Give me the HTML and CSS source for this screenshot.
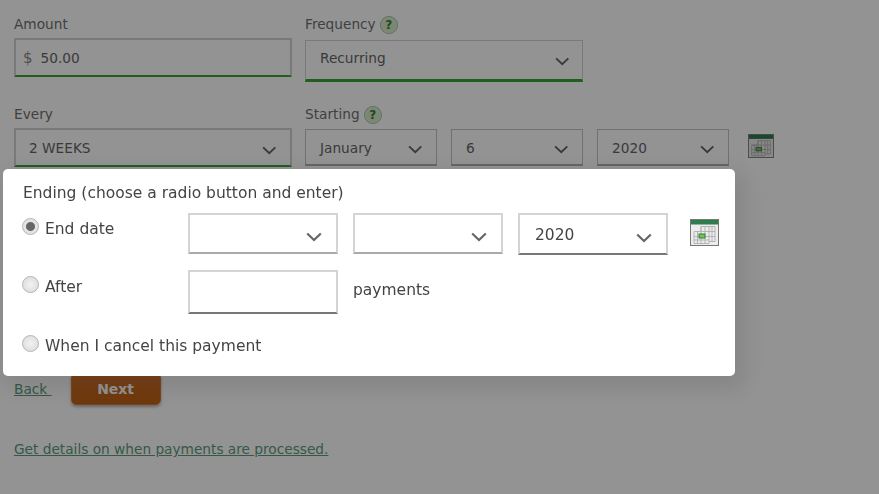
FILE: index.html
```html
<!DOCTYPE html>
<html lang="en">
<head>
<meta charset="utf-8">
<title>Payment</title>
<link rel="stylesheet" href="styles.css">
</head>
<body>
<svg class="defs" width="0" height="0" aria-hidden="true">
  <symbol id="chev" viewBox="0 0 16 10"><path d="M1.2 1.5 8 8l6.800-6.500" fill="none" stroke="#666" stroke-width="2.2"/></symbol>
  <symbol id="cal" viewBox="0 0 29 27">
    <rect x=".5" y=".5" width="28" height="26" fill="#ececec" stroke="#777"/>
    <rect x="1" y="1" width="27" height="4.5" fill="#2f7d4f"/>
    <path d="M11 7.500h14v15h-6v2H4v-12h7zM4 12.500h21M4 17.500h21M4 21h15M11 7.500v17M15 7.500v17M19 7.500v15M22 7.500v15M7.500 12.500v12" fill="none" stroke="#b4b4b4"/>
    <rect x="9" y="15" width="6" height="4" fill="#7cc24a" stroke="#2f7d4f"/>
  </symbol>
</svg>

<main class="page">
  <div class="row">
    <div class="field">
      <div class="label">Amount</div>
      <div class="box amount"><span class="cur">$</span><span>50.00</span></div>
    </div>
    <div class="field">
      <div class="label">Frequency <span class="help">?</span></div>
      <div class="box select freq"><span>Recurring</span><svg class="chev"><use href="#chev"/></svg></div>
    </div>
  </div>
  <div class="row row2">
    <div class="field">
      <div class="label">Every</div>
      <div class="box select every"><span>2 WEEKS</span><svg class="chev"><use href="#chev"/></svg></div>
    </div>
    <div class="field">
      <div class="label">Starting <span class="help">?</span></div>
      <div class="dates">
        <div class="box select small"><span>January</span><svg class="chev"><use href="#chev"/></svg></div>
        <div class="box select small"><span>6</span><svg class="chev"><use href="#chev"/></svg></div>
        <div class="box select small"><span>2020</span><svg class="chev"><use href="#chev"/></svg></div>
        <svg class="cal-small"><use href="#cal"/></svg>
      </div>
    </div>
  </div>
  <div class="actions">
    <a href="#" class="link">Back&nbsp;</a>
    <button class="next" type="button">Next</button>
  </div>
  <a href="#" class="link details">Get details on when payments are processed.</a>
</main>

<div class="overlay"></div>

<section class="modal">
  <h2 class="title">Ending (choose a radio button and enter)</h2>
  <div class="m-row m-date">
    <label class="opt"><input type="radio" name="end" checked><span>End date</span></label>
    <div class="m-fields">
      <div class="mbox msel"><svg class="chev"><use href="#chev"/></svg></div>
      <div class="mbox msel"><svg class="chev"><use href="#chev"/></svg></div>
      <div class="mbox msel filled"><span>2020</span><svg class="chev"><use href="#chev"/></svg></div>
      <svg class="cal-big"><use href="#cal"/></svg>
    </div>
  </div>
  <div class="m-row m-after">
    <label class="opt"><input type="radio" name="end"><span>After</span></label>
    <div class="m-fields">
      <div class="mbox minput"></div>
      <span class="payments">payments</span>
    </div>
  </div>
  <label class="opt m-cancel"><input type="radio" name="end"><span>When I cancel this payment</span></label>
</section>
</body>
</html>
```
FILE: styles.css
```css
* { box-sizing: border-box; }
html, body { margin: 0; height: 100%; }
body {
  background: #fff;
  color: #707070;
  font: 13.7px/20px "DejaVu Sans", Verdana, sans-serif;
  overflow: hidden;
}
.defs { position: absolute; }
.page { padding: 14px 14px 0; }
.row { display: flex; gap: 13px; }
.row2 { margin-top: 22px; }
.field { width: 278px; }
.label { height: 20px; display: flex; align-items: center; gap: 4px; }
.help {
  width: 18px; height: 18px; margin-top: 2px; border-radius: 50%;
  background: #d8e8c6; border: 1px solid #9cc79c;
  box-shadow: inset 0 0 0 1px #e6f0dc;
  color: #2f7d3f; font-weight: 700; font-size: 12px; line-height: 16px; text-align: center;
}
.box {
  display: flex; align-items: center;
  border: 2px solid #d2d2d2; border-bottom: 3px solid #37a337;
  color: #666;
}
.amount { height: 39px; margin-top: 4px; padding: 0 0 0 7px; gap: 8px; border-bottom-width: 2px; }
.cur { color: #888; font-size: 15px; }
.select { justify-content: space-between; }
.freq { height: 42px; margin-top: 6px; padding: 0 13px 4px 14px; border-width: 1px; border-bottom-width: 3px; }
.freq .chev { margin-top: 6px; }
.every { height: 39px; margin-top: 4px; padding: 0 14px 0 13px; border-bottom-width: 2px; }
.every .chev { margin-top: 6px; }
.dates { display: flex; gap: 14px; margin-top: 5px; align-items: flex-start; width: 460px; }
.small {
  flex: 0 0 132px; height: 37px; padding: 0 14px;
  border-width: 1px; border-color: #c4c4c4; border-bottom: 2px solid #b0b0b0;
}
.small span { margin-top: 1px; }
.chev { width: 14.5px; height: 9px; margin-top: 5px; flex: none; }
.cal-small { width: 26px; height: 24px; flex: none; margin: 5px 0 0 5px; }
.actions { display: flex; align-items: flex-end; gap: 19px; margin-top: 206px; height: 32px; }
.link { color: #5c9a7c; text-decoration: underline; }
.actions .link { margin-bottom: 6px; }
.next {
  width: 90px; height: 32px; padding: 0;
  border: 1px solid #d8792f; border-radius: 5px;
  background: linear-gradient(#d07532, #c9691f 50%, #c06016);
  box-shadow: 0 2px 3px rgba(0,0,0,.3);
  color: #fff; font: 700 14px/20px "DejaVu Sans", Verdana, sans-serif;
}
.details { display: inline-block; margin-top: 34px; }
.overlay { position: fixed; inset: 0; background: rgba(0,0,0,.425); }
.modal {
  position: absolute; left: 3px; top: 169px; width: 732px; height: 207px;
  background: #fff; border-radius: 5px; padding: 14px 0 0 20px;
  color: #444; font-size: 15.5px;
  box-shadow: 5px 8px 20px 5px rgba(0,0,0,.09);
}
.title { margin: 0; font: inherit; line-height: 20px; }
.m-row { display: flex; }
.m-date { margin-top: 10px; }
.m-after { margin-top: 15px; }
.opt { display: flex; align-items: center; width: 165px; height: 20px; gap: 6px; }
.opt input {
  appearance: none; margin: 0 0 6px -1px; width: 17px; height: 17px; border-radius: 50%; flex: none;
  border: 1px solid #b5b5b5;
  background: radial-gradient(circle, #f2f2f2, #d8d8d8);
}
.opt input:checked { background: radial-gradient(circle, #666 0 4px, #e4e4e4 5px, #ddd); }
.m-date .opt { margin-top: 6px; }
.m-after .opt { margin-top: 7px; }
.m-fields { display: flex; gap: 15px; align-items: flex-start; }
.mbox { width: 150px; border: 2px solid #d4d4d4; border-bottom-color: #aaa; }
.msel { height: 41px; display: flex; align-items: center; justify-content: flex-end; padding: 0 14px 0 15px; }
.msel .chev { width: 16px; height: 10px; margin-top: 7px; }
.filled { justify-content: space-between; border-bottom-color: #777; height: 42px; }
.filled span { margin-top: 1px; }
.minput { height: 44px; border-bottom-color: #777; }
.cal-big { width: 29px; height: 27px; flex: none; margin: 6px 0 0 7px; }
.payments { margin-top: 10px; }
.m-cancel { width: auto; margin-top: 22px; }
```
